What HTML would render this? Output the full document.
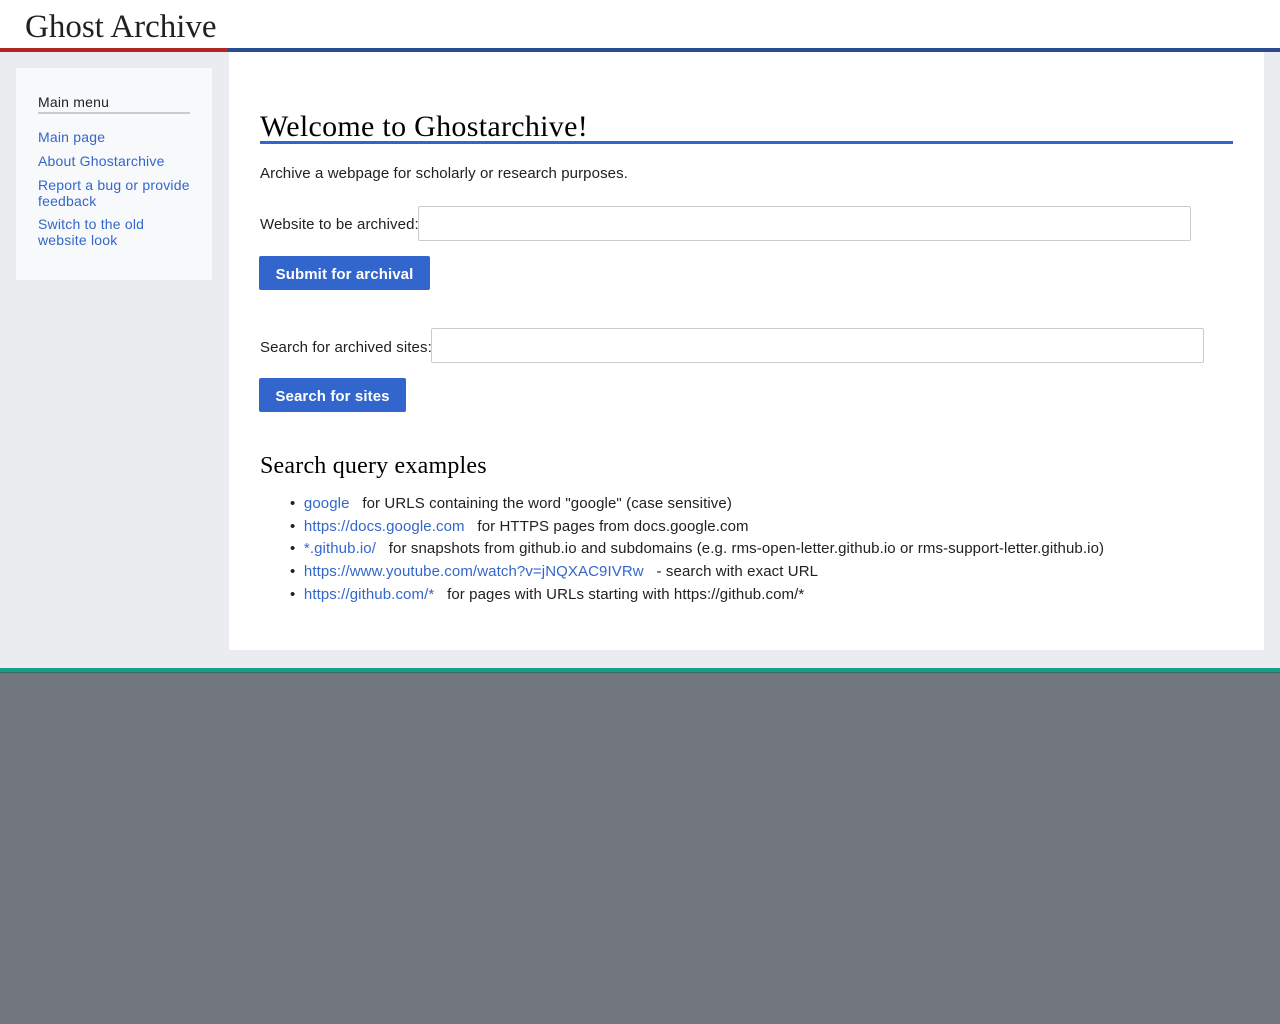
<!DOCTYPE html>
<html><head><style>
*{margin:0;padding:0;box-sizing:border-box}
body{width:1280px;height:1024px;position:relative;background:#eaecf0;font-family:"Liberation Sans",sans-serif;font-size:15px;letter-spacing:0.1px;color:#202122;overflow:hidden}
.a{position:absolute;white-space:nowrap}
a{color:#3366cc;text-decoration:none}
.serif{font-family:"Liberation Serif",serif;letter-spacing:0}
.btn{position:absolute;background:#3366cc;color:#fff;font-weight:bold;font-size:15px;text-align:center;line-height:37px;border-radius:2px}
.inp{position:absolute;border:1px solid #c8ccd1;background:#fff;border-radius:2px}
</style></head><body>
<div class="a" style="left:0;top:0;width:1280px;height:48px;background:#fff"></div>
<div class="a serif" style="left:25px;top:9px;font-size:33px;color:#202122">Ghost Archive</div>
<div class="a" style="left:0;top:48px;width:228px;height:4px;background:#b32424"></div>
<div class="a" style="left:228px;top:48px;width:1052px;height:4px;background:#2a4b8d"></div>
<div class="a" style="left:16px;top:68px;width:196px;height:212px;background:#f8f9fa"></div>
<div class="a" style="left:38px;top:94px;font-size:14px;letter-spacing:0.2px">Main menu</div>
<div class="a" style="left:38px;top:112px;width:152px;height:2px;background:#c8ccd1"></div>
<div class="a" style="left:38px;top:129px;font-size:14px;line-height:16px;letter-spacing:0.2px"><a>Main page</a></div>
<div class="a" style="left:38px;top:153px;font-size:14px;line-height:16px;letter-spacing:0.2px"><a>About Ghostarchive</a></div>
<div class="a" style="left:38px;top:177px;font-size:14px;line-height:16px;letter-spacing:0.2px"><a>Report a bug or provide<br>feedback</a></div>
<div class="a" style="left:38px;top:216px;font-size:14px;line-height:16px;letter-spacing:0.2px"><a>Switch to the old<br>website look</a></div>
<div class="a" style="left:229px;top:52px;width:1035px;height:598px;background:#fff"></div>
<div class="a serif" style="left:260px;top:110px;font-size:30px;letter-spacing:0.3px;color:#000">Welcome to Ghostarchive!</div>
<div class="a" style="left:260px;top:141px;width:973px;height:3px;background:#3366cc"></div>
<div class="a" style="left:260px;top:165px">Archive a webpage for scholarly or research purposes.</div>
<div class="a" style="left:260px;top:216px">Website to be archived:</div>
<div class="inp" style="left:418px;top:206px;width:773px;height:35px"></div>
<div class="btn" style="left:259px;top:256px;width:171px;height:34px">Submit for archival</div>
<div class="a" style="left:260px;top:339px">Search for archived sites:</div>
<div class="inp" style="left:431px;top:328px;width:773px;height:35px"></div>
<div class="btn" style="left:259px;top:378px;width:147px;height:34px">Search for sites</div>
<div class="a serif" style="left:260px;top:453px;font-size:24px;letter-spacing:0.2px;color:#000">Search query examples</div>
<div class="a" style="left:290px;top:493px;line-height:22.7px">
&bull;&nbsp; <a>google</a> &nbsp;&nbsp;for URLS containing the word "google" (case sensitive)<br>
&bull;&nbsp; <a>https://docs.google.com</a> &nbsp;&nbsp;for HTTPS pages from docs.google.com<br>
&bull;&nbsp; <a>*.github.io/</a> &nbsp;&nbsp;for snapshots from github.io and subdomains (e.g. rms-open-letter.github.io or rms-support-letter.github.io)<br>
&bull;&nbsp; <a>https://www.youtube.com/watch?v=jNQXAC9IVRw</a> &nbsp;&nbsp;- search with exact URL<br>
&bull;&nbsp; <a>https://github.com/*</a> &nbsp;&nbsp;for pages with URLs starting with https://github.com/*
</div>
<div class="a" style="left:0;top:668px;width:1280px;height:4px;background:#14a085"></div>
<div class="a" style="left:0;top:672px;width:1280px;height:1px;background:#3a6a5e"></div>
<div class="a" style="left:0;top:673px;width:1280px;height:351px;background:#72777d"></div>
</body></html>
